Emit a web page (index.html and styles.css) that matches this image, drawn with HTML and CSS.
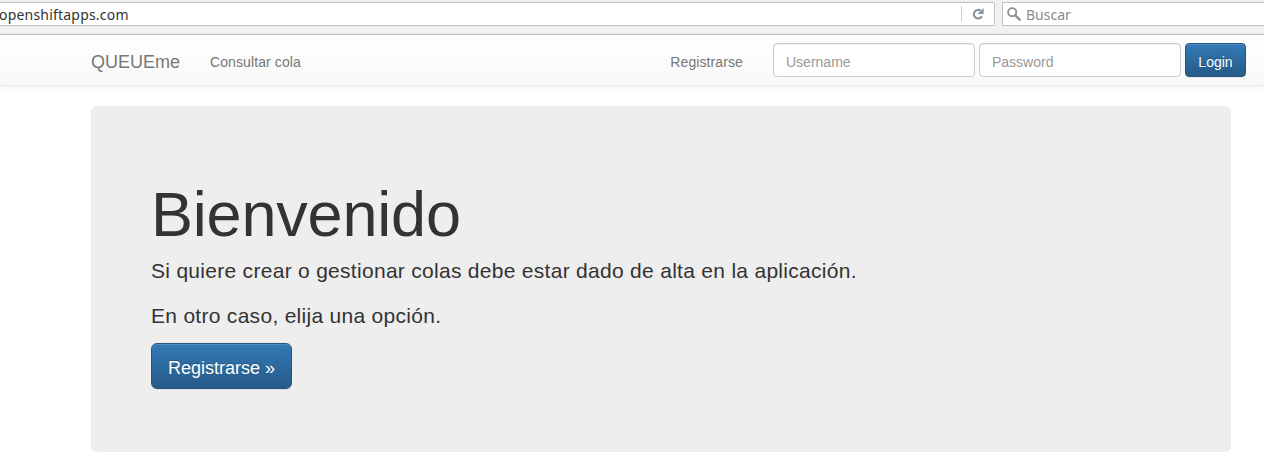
FILE: index.html
```html
<!DOCTYPE html>
<html lang="es">
<head>
<meta charset="utf-8">
<title>QUEUEme</title>
<link rel="stylesheet" href="styles.css">
</head>
<body>
<div class="toolbar">
  <div class="address">
    <span class="url">openshiftapps.com</span>
    <span class="reload">
      <svg width="12" height="12" viewBox="0 0 12 12"><path d="M8.6 2.7A4.3 4.3 0 1 0 9.9 8.3" fill="none" stroke="#8492a2" stroke-width="2.1"/><path d="M11.6 0V6H5.6Z" fill="#8492a2"/></svg>
    </span>
  </div>
  <div class="search">
    <svg width="14" height="14" viewBox="0 0 14 14" fill="none" stroke="#909090"><circle cx="5.2" cy="5.2" r="4.1" stroke-width="1.9"/><path d="M8.3 8.3L12.6 12.6" stroke-width="2.5" stroke-linecap="round"/></svg>
    <span class="search-label">Buscar</span>
  </div>
</div>
<nav class="navbar">
  <a class="brand">QUEUEme</a>
  <a class="nav-link">Consultar cola</a>
  <a class="nav-link nav-register">Registrarse</a>
  <form class="login">
    <input class="field" type="text" placeholder="Username">
    <input class="field" type="password" placeholder="Password">
    <button class="btn" type="button">Login</button>
  </form>
</nav>
<main class="jumbotron">
  <h1 class="title">Bienvenido</h1>
  <p class="lead">Si quiere crear o gestionar colas debe estar dado de alta en la aplicación.</p>
  <p class="lead">En otro caso, elija una opción.</p>
  <a class="btn btn-lg">Registrarse »</a>
</main>
</body>
</html>
```

FILE: styles.css
```css
* { box-sizing: border-box; }
body {
  margin: 0;
  overflow: hidden;
  background: #fff;
  color: #333;
  font: 14px/20px "Liberation Sans", Arial, sans-serif;
}
.toolbar {
  display: flex;
  gap: 7px;
  height: 35px;
  padding-top: 2px;
  background: #f2f1f0;
  border-bottom: 1px solid #bfbeba;
  font: 14px/22px "Noto Sans", sans-serif;
}
.address {
  display: flex;
  align-items: center;
  justify-content: space-between;
  width: 995px;
  height: 24px;
  background: #fff;
  border: 1px solid #c2c0bd;
  border-left: 0;
  border-radius: 0 2px 2px 0;
}
.url { margin-left: -1px; padding-top: 2px; letter-spacing: 0.2px; }
.reload {
  display: flex;
  align-items: center;
  justify-content: center;
  width: 33px;
  height: 16px;
  border-left: 1px solid #ccc;
}
.search {
  display: flex;
  flex: 1;
  align-items: center;
  gap: 5px;
  height: 24px;
  padding-left: 4px;
  background: #fff;
  border: 1px solid #c2c0bd;
  border-right: 0;
  border-radius: 2px 0 0 2px;
}
.search-label { padding-top: 2px; color: #8b8b8b; }
.navbar {
  display: flex;
  align-items: center;
  height: 51px;
  padding: 0 18px 0 91px;
  background: linear-gradient(#fff, #f8f8f8);
  border-bottom: 1px solid #e7e7e7;
  box-shadow: inset 0 1px 0 rgba(255,255,255,.15), 0 1px 5px rgba(0,0,0,.075);
  color: #777;
  text-shadow: 0 1px 0 rgba(255,255,255,.25);
}
.brand { font-size: 18px; margin-right: 30px; padding-top: 3px; }
.nav-link { padding-top: 3px; letter-spacing: 0.1px; }
.nav-register { margin-left: auto; margin-right: 30px; }
.login { display: flex; gap: 4px; }
.field {
  width: 202px;
  height: 34px;
  padding: 9px 12px 5px;
  border: 1px solid #ccc;
  border-radius: 4px;
  box-shadow: inset 0 1px 1px rgba(0,0,0,.075);
  background: #fff;
  font: inherit;
}
.field::placeholder { color: #999; opacity: 1; }
.btn {
  display: inline-block;
  min-width: 61px;
  height: 34px;
  padding: 8px 12px 4px;
  border: 1px solid #245580;
  border-radius: 4px;
  background: linear-gradient(#337ab7, #265a88);
  box-shadow: inset 0 1px 0 rgba(255,255,255,.15), 0 1px 1px rgba(0,0,0,.075);
  color: #fff;
  font: inherit;
  text-shadow: 0 -1px 0 rgba(0,0,0,.2);
}
.jumbotron {
  width: 1140px;
  height: 346px;
  margin: 20px 0 0 91px;
  padding: 74px 60px 0;
  border-radius: 6px;
  background: #eee;
}
.title {
  margin: 0 0 7px;
  font-size: 63px;
  line-height: 69px;
  font-weight: 400;
  letter-spacing: -0.2px;
}
.lead {
  margin: 0 0 15px;
  font-size: 21px;
  line-height: 30px;
  letter-spacing: 0.29px;
}
.lead:last-of-type { margin-bottom: 12px; }
.btn-lg {
  height: 46px;
  padding: 12px 16px 8px;
  border-radius: 6px;
  font-size: 18px;
  line-height: 24px;
}
```
